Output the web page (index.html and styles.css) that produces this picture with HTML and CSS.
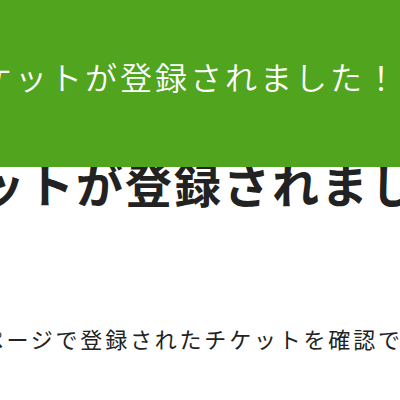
FILE: index.html
```html
<!DOCTYPE html>
<html lang="ja">
<head>
<meta charset="utf-8">
<link rel="stylesheet" href="styles.css">
</head>
<body>
<div class="toast"><span class="toast-text">チケットが登録されました！</span></div>
<main class="page">
  <h1 class="title">チケットが登録されました</h1>
  <p class="lead">マイページで登録されたチケットを確認できます。</p>
</main>
</body>
</html>
```
FILE: styles.css
```css
html, body {
  margin: 0;
  padding: 0;
  background: #ffffff;
  overflow: hidden;
}
body {
  font-family: "Noto Sans CJK JP", "Noto Sans", sans-serif;
  width: 400px;
  height: 400px;
}
.toast {
  position: fixed;
  top: 0;
  left: 0;
  right: 0;
  height: 167px;
  background: #50a41e;
  box-sizing: border-box;
  padding-top: 60px;
  white-space: nowrap;
  overflow: hidden;
  z-index: 10;
}
.toast-text {
  display: block;
  margin-left: -55px;
  color: #ffffff;
  font-size: 32px;
  font-weight: 350;
  letter-spacing: 3px;
  line-height: 32px;
}
.page {
  padding-top: 160px;
  white-space: nowrap;
}
.title {
  margin: 0 0 0 -120px;
  font-size: 47px;
  font-weight: 700;
  letter-spacing: 2px;
  line-height: 46px;
  color: #222222;
}
.lead {
  margin: 121px 0 0 -68px;
  font-size: 22px;
  font-weight: 400;
  letter-spacing: 2.8px;
  line-height: 22px;
  color: #222222;
}
```
